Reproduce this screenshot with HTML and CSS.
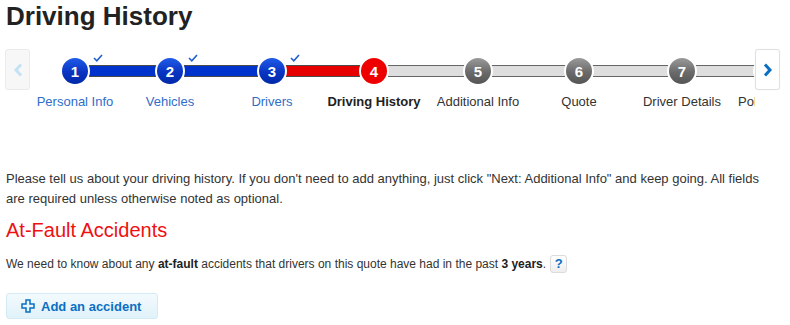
FILE: index.html
```html
<!DOCTYPE html>
<html lang="en">
<head>
<meta charset="utf-8">
<title>Driving History</title>
<link rel="stylesheet" href="styles.css">
</head>
<body>
<h1 class="title">Driving History</h1>

<div class="stepper">
  <button class="nav nav-prev" aria-label="Previous">
    <svg width="10" height="14" viewBox="0 0 10 14"><path d="M8 1.5 L3 7 L8 12.5" fill="none" stroke="#c4e2f5" stroke-width="3"/></svg>
  </button>
  <div class="viewport">
    <ol class="steps">
      <li class="step">
        <div class="track">
          <span class="bar bar-r blue"></span>
          <span class="dot dot-blue">1</span>
          <svg class="check" width="10" height="8" viewBox="0 0 10 8"><path d="M1 4 L3.8 6.8 L9 1" fill="none" stroke="#1f5fcf" stroke-width="1.6"/></svg>
        </div>
        <span class="label label-done">Personal Info</span>
      </li>
      <li class="step">
        <div class="track">
          <span class="bar bar-l blue"></span>
          <span class="bar bar-r blue"></span>
          <span class="dot dot-blue">2</span>
          <svg class="check" width="10" height="8" viewBox="0 0 10 8"><path d="M1 4 L3.8 6.8 L9 1" fill="none" stroke="#1f5fcf" stroke-width="1.6"/></svg>
        </div>
        <span class="label label-done">Vehicles</span>
      </li>
      <li class="step">
        <div class="track">
          <span class="bar bar-l blue"></span>
          <span class="bar bar-r red"></span>
          <span class="dot dot-blue">3</span>
          <svg class="check" width="10" height="8" viewBox="0 0 10 8"><path d="M1 4 L3.8 6.8 L9 1" fill="none" stroke="#1f5fcf" stroke-width="1.6"/></svg>
        </div>
        <span class="label label-done">Drivers</span>
      </li>
      <li class="step">
        <div class="track">
          <span class="bar bar-l red"></span>
          <span class="bar bar-r gray"></span>
          <span class="dot dot-red">4</span>
        </div>
        <span class="label label-current">Driving History</span>
      </li>
      <li class="step">
        <div class="track">
          <span class="bar bar-l gray"></span>
          <span class="bar bar-r gray"></span>
          <span class="dot dot-gray">5</span>
        </div>
        <span class="label">Additional Info</span>
      </li>
      <li class="step">
        <div class="track">
          <span class="bar bar-l gray"></span>
          <span class="bar bar-r gray"></span>
          <span class="dot dot-gray">6</span>
        </div>
        <span class="label">Quote</span>
      </li>
      <li class="step">
        <div class="track">
          <span class="bar bar-l gray"></span>
          <span class="bar bar-r gray"></span>
          <span class="dot dot-gray">7</span>
        </div>
        <span class="label">Driver Details</span>
      </li>
      <li class="step">
        <div class="track">
          <span class="bar bar-l gray"></span>
          <span class="dot dot-gray">8</span>
        </div>
        <span class="label">Policy Info</span>
      </li>
    </ol>
  </div>
  <button class="nav nav-next" aria-label="Next">
    <svg width="10" height="14" viewBox="0 0 10 14"><path d="M2 1.5 L7 7 L2 12.5" fill="none" stroke="#0a6fc2" stroke-width="3"/></svg>
  </button>
</div>

<p class="intro">Please tell us about your driving history. If you don't need to add anything, just click "Next: Additional Info" and keep going. All fields are required unless otherwise noted as optional.</p>

<h2 class="section-title">At-Fault Accidents</h2>

<p class="note">We need to know about any <b>at-fault</b> accidents that drivers on this quote have had in the past <b>3 years</b>.<button class="help" aria-label="Help">?</button></p>

<button class="add-btn">
  <svg width="14" height="14" viewBox="0 0 14 14"><path d="M5 1 H9 V5 H13 V9 H9 V13 H5 V9 H1 V5 H5 Z" fill="none" stroke="#0a6fc2" stroke-width="1.5"/></svg>
  <span>Add an accident</span>
</button>
</body>
</html>
```

FILE: styles.css
```css
html, body {
  margin: 0;
  padding: 0;
  background: #fff;
}

body {
  font-family: "Liberation Sans", Arial, sans-serif;
  color: #333;
}

.title {
  margin: 0;
  padding: 0 6px;
  font-size: 26px;
  line-height: 32px;
  font-weight: bold;
  color: #222;
}

/* ---------- stepper ---------- */
.stepper {
  display: flex;
  align-items: flex-start;
  margin: 17px 10px 0 5px;
}

.nav {
  flex: 0 0 25px;
  width: 25px;
  height: 41px;
  padding: 0;
  border-radius: 3px;
  display: flex;
  align-items: center;
  justify-content: center;
  cursor: pointer;
}

.nav-prev {
  background: #f7f7f7;
  border: 1px solid #ebebeb;
}

.nav-next {
  background: #fff;
  border: 1px solid #e0e0e0;
  box-shadow: 0 0 1px rgba(0, 0, 0, 0.08);
}

.viewport {
  flex: 1 1 auto;
  overflow: hidden;
  min-width: 0;
}

.steps {
  list-style: none;
  margin: 0;
  padding: 7px 0 0;
  display: grid;
  grid-template-columns: 90px 100px 104px 100px 108px 94px 112px 60px;
  width: max-content;
}

.step {
  display: flex;
  flex-direction: column;
  align-items: center;
}

.track {
  position: relative;
  width: 100%;
  height: 30px;
  display: flex;
  justify-content: center;
}

.bar {
  position: absolute;
  top: 9px;
  height: 12px;
  box-sizing: border-box;
  border-top: 1px solid #4a4a4a;
  border-bottom: 1px solid #4a4a4a;
}

.bar-l { left: 0; right: 50%; }
.bar-r { left: 50%; right: 0; }

.bar.blue { background: #0033cc; }
.bar.red { background: #e60000; }
.bar.gray {
  background: #dedede;
  border-color: #666;
}

.dot {
  position: relative;
  z-index: 1;
  width: 30px;
  height: 30px;
  box-sizing: border-box;
  border: 2px solid #fff;
  border-radius: 50%;
  display: flex;
  align-items: center;
  justify-content: center;
  color: #fff;
  font-weight: bold;
  font-size: 15px;
}

.dot-blue { background: linear-gradient(#1f5be8, #0a34c2 55%, #0029a8); }
.dot-red { background: #ee0000; }
.dot-gray { background: linear-gradient(#9a9a9a, #6a6a6a 55%, #555); }

.check {
  position: absolute;
  z-index: 2;
  left: calc(50% + 18px);
  top: -2px;
}

.label {
  margin-top: 8px;
  font-size: 13px;
  line-height: 16px;
  white-space: nowrap;
  color: #333;
}

.label-done { color: #2f6dc9; }

.label-current {
  font-weight: bold;
  color: #222;
}

/* ---------- body content ---------- */
.intro {
  margin: 59px 22px 0 6px;
  font-size: 13px;
  line-height: 20px;
  color: #333;
}

.section-title {
  margin: 9px 6px 0;
  font-size: 20px;
  line-height: 24px;
  font-weight: normal;
  color: #ee1111;
}

.note {
  margin: 12px 6px 0;
  font-size: 12px;
  line-height: 20px;
  color: #333;
}

.note b {
  color: #222;
}

.help {
  display: inline-block;
  vertical-align: middle;
  margin: -2px 0 0 4px;
  width: 17px;
  height: 18px;
  padding: 0;
  box-sizing: border-box;
  border: 1px solid #dcdcdc;
  border-radius: 3px;
  background: linear-gradient(#ffffff, #eeeeee);
  color: #0a6fc2;
  font-family: "Liberation Sans", Arial, sans-serif;
  font-weight: bold;
  font-size: 13px;
  line-height: 16px;
  cursor: pointer;
}

.add-btn {
  display: flex;
  align-items: center;
  gap: 6px;
  margin: 19px 0 0 6px;
  height: 26px;
  padding: 0 16px 0 14px;
  box-sizing: border-box;
  border: 1px solid #d4eaf4;
  border-radius: 3px;
  background: linear-gradient(#f3fafd, #e0f2fa);
  color: #0a6fc2;
  font-family: "Liberation Sans", Arial, sans-serif;
  font-weight: bold;
  font-size: 13px;
  cursor: pointer;
}
```
